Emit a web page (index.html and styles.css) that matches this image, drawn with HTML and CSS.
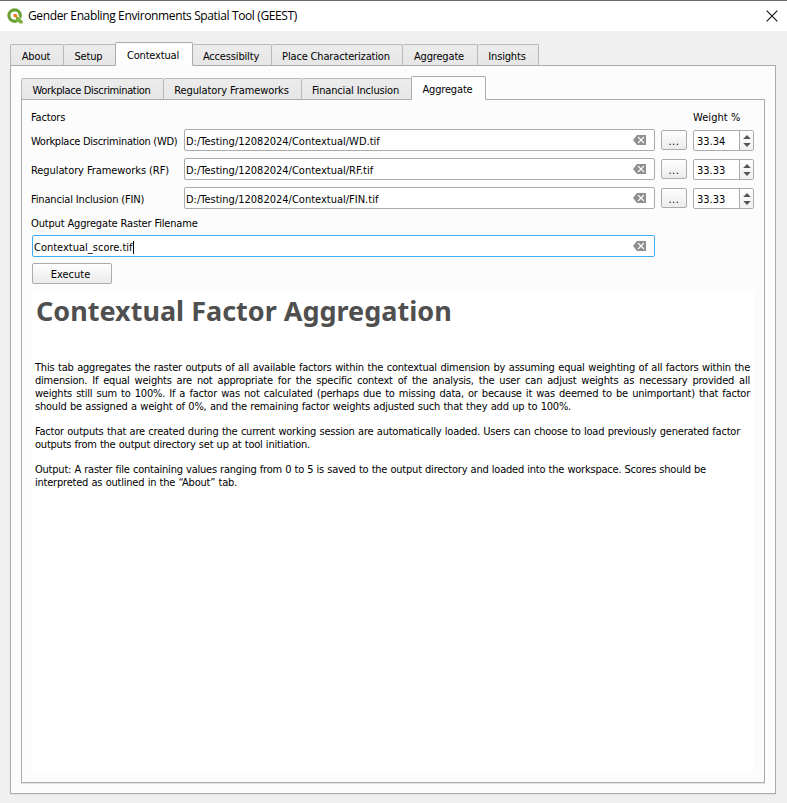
FILE: index.html
```html
<!DOCTYPE html>
<html lang="en">
<head>
<meta charset="utf-8">
<title>Gender Enabling Environments Spatial Tool (GEEST)</title>
<link rel="stylesheet" href="styles.css">
</head>
<body>
<svg class="defs" width="0" height="0">
  <symbol id="clear" viewBox="0 0 13 10"><path d="M4 0H13V10H4L0 5Z" fill="#8f8f8f"/><path d="M5 2l6 6M11 2l-6 6" stroke="#fff" stroke-width="1.1"/></symbol>
  <symbol id="spin" viewBox="0 0 8 12"><path d="M4 0L7.8 4H.2ZM4 12L7.8 8H.2Z" fill="#555"/></symbol>
</svg>
<header class="titlebar">
  <svg class="logo" width="16" height="16" viewBox="0 0 16 16">
    <circle cx="7.6" cy="7.6" r="5.7" fill="none" stroke="#6ba033" stroke-width="3.2"/>
    <path d="M7.5 7.5H11L16 13V15.5H12.8L7.5 10Z" fill="#fff"/>
    <path d="M9 9H11.6L15.6 13.2V15.5H12.8L9 11.5Z" fill="#7bb038"/>
    <path d="M6.5 6H9.5L10.5 8.8L8 9.5L6.5 8.5Z" fill="#ee7913"/>
  </svg>
  <h1 class="title"><span>Gender Enabling Environments Spatial Tool (GEEST)</span></h1>
  <svg class="close" width="12" height="12" viewBox="0 0 12 12"><path d="M.7.7l10.6 10.6M11.3.7L.7 11.3" stroke="#111" stroke-width="1.1"/></svg>
</header>
<main class="window">
  <nav class="tabs outer-tabs">
    <div class="tab"><span>About</span></div>
    <div class="tab"><span>Setup</span></div>
    <div class="tab active"><span>Contextual</span></div>
    <div class="tab"><span>Accessibilty</span></div>
    <div class="tab"><span>Place Characterization</span></div>
    <div class="tab"><span>Aggregate</span></div>
    <div class="tab"><span>Insights</span></div>
  </nav>
  <section class="pane outer-pane">
    <nav class="tabs inner-tabs">
      <div class="tab"><span>Workplace Discrimination</span></div>
      <div class="tab"><span>Regulatory Frameworks</span></div>
      <div class="tab"><span>Financial Inclusion</span></div>
      <div class="tab active"><span>Aggregate</span></div>
    </nav>
    <section class="pane inner-pane">
      <div class="heads"><span>Factors</span><span class="weight">Weight %</span></div>
      <div class="factor">
        <label class="tight">Workplace Discrimination (WD)</label>
        <div class="field"><span>D:/Testing/12082024/Contextual/WD.tif</span><svg class="clear"><use href="#clear"/></svg></div>
        <button class="browse">...</button>
        <div class="spin"><span>33.34</span><i><svg><use href="#spin"/></svg></i></div>
      </div>
      <div class="factor">
        <label class="loose">Regulatory Frameworks (RF)</label>
        <div class="field"><span>D:/Testing/12082024/Contextual/RF.tif</span><svg class="clear"><use href="#clear"/></svg></div>
        <button class="browse">...</button>
        <div class="spin"><span>33.33</span><i><svg><use href="#spin"/></svg></i></div>
      </div>
      <div class="factor">
        <label>Financial Inclusion (FIN)</label>
        <div class="field"><span>D:/Testing/12082024/Contextual/FIN.tif</span><svg class="clear"><use href="#clear"/></svg></div>
        <button class="browse">...</button>
        <div class="spin"><span>33.33</span><i><svg><use href="#spin"/></svg></i></div>
      </div>
      <div class="out-label">Output Aggregate Raster Filename</div>
      <div class="field focus"><span class="caret">Contextual_score.tif</span><svg class="clear"><use href="#clear"/></svg></div>
      <button class="execute">Execute</button>
      <article class="help">
        <h2>Contextual Factor Aggregation</h2>
        <p>
          <span>This tab aggregates the raster outputs of all available factors within the contextual dimension by assuming equal weighting of all factors within the</span>
          <span>dimension. If equal weights are not appropriate for the specific context of the analysis, the user can adjust weights as necessary provided all</span>
          <span>weights still sum to 100%. If a factor was not calculated (perhaps due to missing data, or because it was deemed to be unimportant) that factor</span>
          <span class="w536">should be assigned a weight of 0%, and the remaining factor weights adjusted such that they add up to 100%.</span>
        </p>
        <p>
          <span class="w705">Factor outputs that are created during the current working session are automatically loaded. Users can choose to load previously generated factor</span>
          <span class="w275">outputs from the output directory set up at tool initiation.</span>
        </p>
        <p>
          <span class="w671">Output: A raster file containing values ranging from 0 to 5 is saved to the output directory and loaded into the workspace. Scores should be</span>
          <span class="w202">interpreted as outlined in the “About” tab.</span>
        </p>
      </article>
    </section>
  </section>
</main>
</body>
</html>
```

FILE: styles.css
```css
* { box-sizing: border-box; }
body {
  margin: 0;
  width: 787px;
  height: 803px;
  overflow: hidden;
  background: #f0f0f0;
  color: #000;
  font: 11px/13px "DejaVu Sans Condensed", "DejaVu Sans", sans-serif;
  font-stretch: condensed;
  letter-spacing: -0.16px;
  white-space: nowrap;
}
.defs { display: block; height: 0; }
.titlebar {
  height: 31px;
  border-top: 1px solid #6c6a6c;
  background: #fff;
  display: flex;
  align-items: center;
  padding: 0 9px 0 7px;
}
.title {
  margin: 0 auto 0 5px;
  font: 12px/16px "Open Sans", "Noto Sans", sans-serif;
  letter-spacing: -0.37px;
}
.close { margin-bottom: 1px; }
.window { padding: 11px 11px 0 10px; }
.tabs { display: flex; align-items: flex-end; height: 24px; margin-bottom: -1px; position: relative; }
.tab {
  height: 22px;
  border: 1px solid #b9b9b9;
  border-bottom-color: #ababab;
  border-left-width: 0;
  border-radius: 2px 2px 0 0;
  background: linear-gradient(#ececec, #e6e6e6);
  text-align: center;
  line-height: 23px;
  padding-right: 2px;
}
.tab:first-child { border-left-width: 1px; }
.tab.active {
  height: 24px;
  line-height: 25px;
  background: #fdfdfd;
  border-color: #ababab;
  border-bottom-color: #fdfdfd;
  border-left-width: 1px;
  margin-left: -1px;
}
.outer-tabs .tab:nth-child(1) { width: 54px; }
.outer-tabs .tab:nth-child(2) { width: 52px; }
.outer-tabs .tab:nth-child(3) { width: 78px; }
.outer-tabs .tab:nth-child(4) { width: 79px; }
.outer-tabs .tab:nth-child(5) { width: 131px; }
.outer-tabs .tab:nth-child(6) { width: 75px; }
.outer-tabs .tab:nth-child(7) { width: 61px; }
.inner-tabs .tab:nth-child(1) { width: 143px; letter-spacing: -0.35px; }
.inner-tabs .tab:nth-child(2) { width: 138px; letter-spacing: -0.1px; }
.inner-tabs .tab:nth-child(3) { width: 110px; }
.inner-tabs .tab:nth-child(4) { width: 75px; }
.pane { border: 1px solid #ababab; background: #fcfcfc; box-shadow: 0 1px #e3e3e3; }
.outer-pane { height: 729px; padding: 10px 10px 0; }
.inner-pane { height: 684px; padding: 10px 10px 0; }
.heads { display: flex; justify-content: space-between; height: 19px; line-height: 15px; }
.heads span:first-child { margin-left: -1px; }
.weight { width: 61px; letter-spacing: 0.05px; }
.factor { display: flex; height: 29px; align-items: flex-start; }
.factor label { width: 153px; margin-left: -1px; line-height: 26px; }
.tight { letter-spacing: -0.28px; }
.loose { letter-spacing: -0.08px; }
.field {
  width: 471px;
  height: 22px;
  border: 1px solid #ababab;
  border-radius: 2px;
  background: #fff;
  display: flex;
  align-items: center;
  justify-content: space-between;
  padding: 3px 8px 0 1px;
  letter-spacing: 0;
}
.clear { width: 13px; height: 10px; margin-top: -3px; }
button {
  font: inherit;
  letter-spacing: inherit;
  color: #000;
  padding: 0;
  border: 1px solid #ababab;
  border-radius: 2px;
  background: linear-gradient(#fefefe, #ebebeb);
}
.browse { width: 26px; height: 20px; margin: 1px 6px 0; padding-top: 2px; letter-spacing: 0.6px; }
.spin {
  width: 61px;
  height: 21px;
  margin-top: 1px;
  border: 1px solid #ababab;
  border-radius: 2px;
  background: #fff;
  display: flex;
  justify-content: space-between;
  line-height: 22px;
  padding-left: 3px;
  letter-spacing: 0;
}
.spin i { width: 14px; border-left: 1px solid #ababab; background: linear-gradient(#fefefe, #f0f0f0); display: flex; align-items: center; justify-content: center; }
.spin svg { width: 8px; height: 12px; }
.out-label { height: 19px; line-height: 16px; margin-left: -1px; }
.focus { width: 623px; border-color: #3daef5; }
.caret { border-right: 1px solid #000; }
.execute { display: block; width: 80px; height: 21px; margin-top: 6px; padding: 1px 3px 0 0; letter-spacing: 0; }
.help { width: 722px; height: 482px; margin-top: 6px; background: #fff; padding: 5px 4px 0 3px; }
h2 { margin: 0 0 34px 1px; color: #4f4f4f; font: bold 27px/32px "Noto Sans", sans-serif; letter-spacing: 0; }
p { margin: 0 0 12px; letter-spacing: -0.22px; }
p span { display: block; width: 715px; text-align-last: justify; }
p .w536 { width: 536px; }
p .w705 { width: 705px; }
p .w275 { width: 275px; }
p .w671 { width: 671px; }
p .w202 { width: 202px; }
```
